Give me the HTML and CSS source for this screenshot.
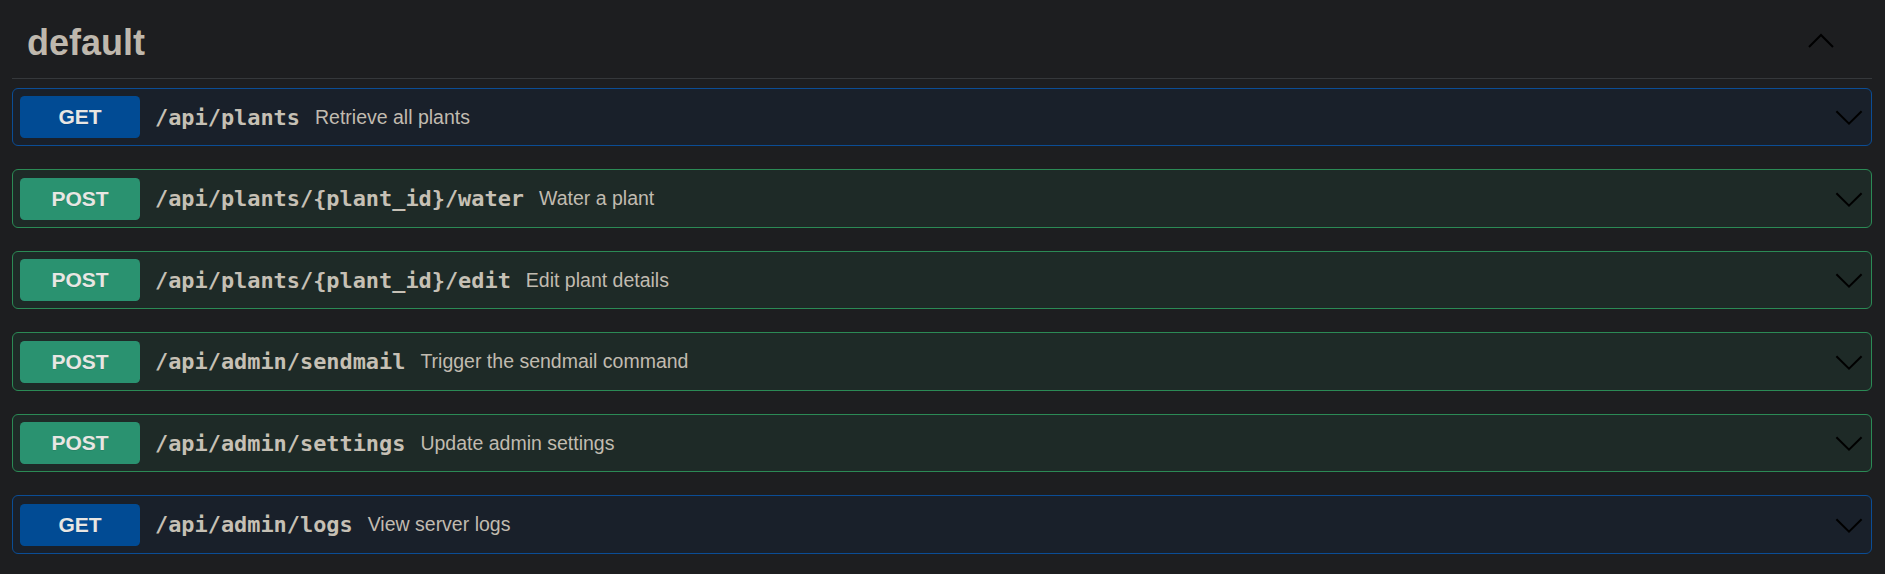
FILE: index.html
```html
<!DOCTYPE html>
<html lang="en">
<head>
<meta charset="utf-8">
<title>default</title>
<link rel="stylesheet" href="styles.css">
</head>
<body>
<div class="wrap">
  <div class="tag">
    <h3 class="tag-title">default</h3>
    <button class="expand tag-expand" aria-label="collapse">
      <svg viewBox="0 0 20 20" width="30" height="30"><path d="M2 14 L10 6 L18 14" fill="none" stroke="#000" stroke-width="1.35"/></svg>
    </button>
  </div>

  <div class="op op-get">
    <span class="method">GET</span>
    <span class="path">/api/plants</span>
    <span class="desc">Retrieve all plants</span>
    <button class="expand" aria-label="expand"><svg viewBox="0 0 20 20" width="30" height="30"><path d="M1.6 6.2 L10 14.4 L18.4 6.2" fill="none" stroke="#000" stroke-width="1.35"/></svg></button>
  </div>

  <div class="op op-post">
    <span class="method">POST</span>
    <span class="path">/api/plants/{plant_id}/water</span>
    <span class="desc">Water a plant</span>
    <button class="expand" aria-label="expand"><svg viewBox="0 0 20 20" width="30" height="30"><path d="M1.6 6.2 L10 14.4 L18.4 6.2" fill="none" stroke="#000" stroke-width="1.35"/></svg></button>
  </div>

  <div class="op op-post">
    <span class="method">POST</span>
    <span class="path">/api/plants/{plant_id}/edit</span>
    <span class="desc">Edit plant details</span>
    <button class="expand" aria-label="expand"><svg viewBox="0 0 20 20" width="30" height="30"><path d="M1.6 6.2 L10 14.4 L18.4 6.2" fill="none" stroke="#000" stroke-width="1.35"/></svg></button>
  </div>

  <div class="op op-post">
    <span class="method">POST</span>
    <span class="path">/api/admin/sendmail</span>
    <span class="desc">Trigger the sendmail command</span>
    <button class="expand" aria-label="expand"><svg viewBox="0 0 20 20" width="30" height="30"><path d="M1.6 6.2 L10 14.4 L18.4 6.2" fill="none" stroke="#000" stroke-width="1.35"/></svg></button>
  </div>

  <div class="op op-post">
    <span class="method">POST</span>
    <span class="path">/api/admin/settings</span>
    <span class="desc">Update admin settings</span>
    <button class="expand" aria-label="expand"><svg viewBox="0 0 20 20" width="30" height="30"><path d="M1.6 6.2 L10 14.4 L18.4 6.2" fill="none" stroke="#000" stroke-width="1.35"/></svg></button>
  </div>

  <div class="op op-get">
    <span class="method">GET</span>
    <span class="path">/api/admin/logs</span>
    <span class="desc">View server logs</span>
    <button class="expand" aria-label="expand"><svg viewBox="0 0 20 20" width="30" height="30"><path d="M1.6 6.2 L10 14.4 L18.4 6.2" fill="none" stroke="#000" stroke-width="1.35"/></svg></button>
  </div>
</div>
</body>
</html>
```

FILE: styles.css
```css
html, body {
  margin: 0;
  padding: 0;
  background: #1d1e20;
}

body {
  font-family: "Liberation Sans", Arial, sans-serif;
  color: #c1bbb0;
}

.wrap {
  padding: 0 13px 0 12px;
}

.tag {
  display: flex;
  align-items: center;
  padding: 22px 30px 15px 15px;
  margin-bottom: 8.5px;
  border-bottom: 1px solid #35383b;
}

.tag-title {
  flex: 1 1 auto;
  margin: 0;
  font-size: 36px;
  font-weight: 700;
  line-height: 41.4px;
  color: #bfb8ad;
}

.expand {
  display: block;
  flex: 0 0 auto;
  margin: 0 0 0 auto;
  padding: 0;
  border: none;
  background: none;
  width: 30px;
  height: 30px;
}

.expand svg {
  display: block;
}

.tag-expand {
  align-self: flex-start;
  margin-top: 4px;
  margin-right: 6px;
}

.op {
  display: flex;
  align-items: center;
  padding: 7.25px 7px;
  border: 1px solid;
  border-radius: 6px;
  margin-bottom: 23px;
}

.op-get {
  background: #19202a;
  border-color: #0b4d95;
}

.op-post {
  background: #1e2a27;
  border-color: #2b8a55;
}

.method {
  display: block;
  width: 120px;
  height: 42px;
  line-height: 42px;
  border-radius: 4.5px;
  text-align: center;
  font-size: 21px;
  font-weight: 700;
  color: #e8e6e3;
  text-shadow: 0 1px 0 rgba(0, 0, 0, 0.1);
  flex: 0 0 auto;
}

.op-get .method {
  background: #014b94;
}

.op-post .method {
  background: #2a9270;
}

.path {
  padding: 0 15px;
  font-family: "DejaVu Sans Mono", "Liberation Mono", monospace;
  font-weight: 700;
  font-size: 21.9px;
  color: #c6c0b5;
  white-space: nowrap;
}

.desc {
  flex: 1 1 auto;
  font-size: 19.5px;
  color: #c1bbb0;
}
```
